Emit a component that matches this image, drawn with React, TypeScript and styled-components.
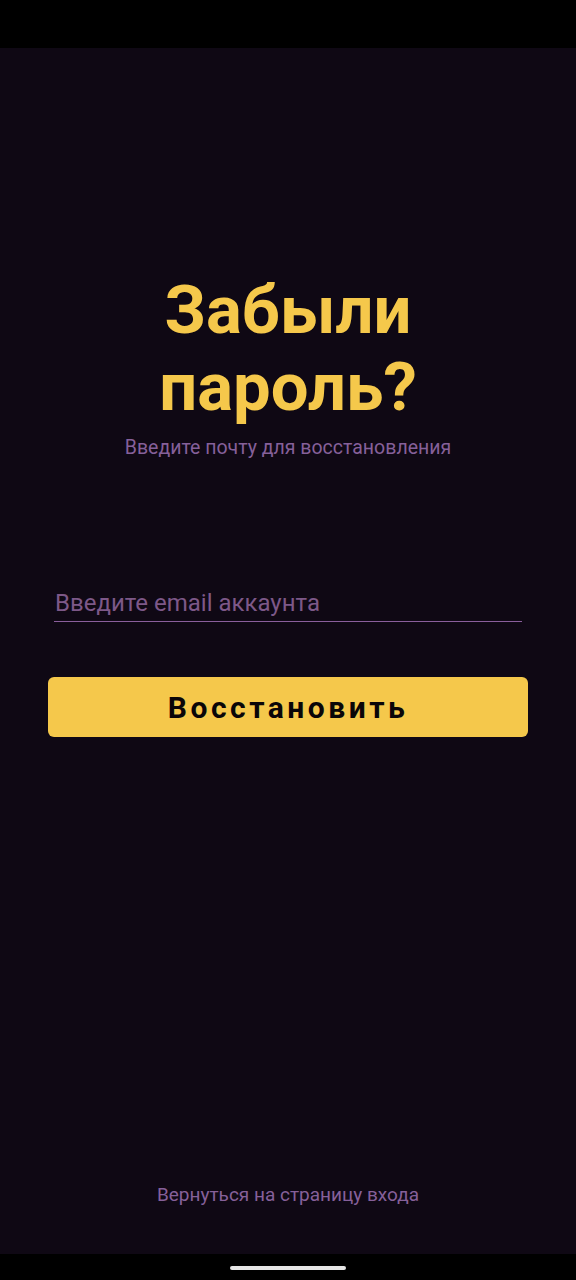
import { useState } from "react"
import styled, { createGlobalStyle } from "styled-components"

const GlobalStyle = createGlobalStyle`
   html, body {
      margin: 0;
      padding: 0;
      background: #0f0814;
   }
   * {
      box-sizing: border-box;
   }
`

const Screen = styled.div`
   width: 576px;
   height: 1280px;
   display: flex;
   flex-direction: column;
   background: #0f0814;
   font-family: Roboto, "Noto Sans", sans-serif;
`

const StatusBar = styled.div`
   height: 48px;
   flex-shrink: 0;
   background: #000;
`

const Content = styled.main`
   flex: 1;
   display: flex;
   flex-direction: column;
   align-items: center;
   padding: 224px 48px 0;
`

const Title = styled.h1`
   margin: 0;
   color: #f5c84b;
   font-size: 67px;
   font-weight: 700;
   line-height: 77px;
   text-align: center;
   width: 320px;
`

const Subtitle = styled.p`
   margin: 10px 0 0;
   color: #86609a;
   font-size: 19.5px;
   line-height: 24px;
   text-align: center;
`

const Field = styled.input`
   margin: 124px 6px 0;
   align-self: stretch;
   height: 38px;
   padding: 0 1px;
   background: transparent;
   border: none;
   border-bottom: 1px solid #8a5e9c;
   color: #e0d0e8;
   font-family: inherit;
   font-size: 24px;
   outline: none;

   &::placeholder {
      color: #7d5888;
   }
`

const PrimaryButton = styled.button`
   margin-top: 55px;
   align-self: stretch;
   height: 60px;
   border: none;
   border-radius: 6px;
   background: #f5c84b;
   color: #0a0608;
   font-family: inherit;
   font-size: 30px;
   font-weight: 700;
   letter-spacing: 3.5px;
   cursor: pointer;
`

const Spacer = styled.div`
   flex: 1;
`

const BackLink = styled.a`
   margin-bottom: 47px;
   color: #86609a;
   font-size: 19px;
   line-height: 24px;
   text-decoration: none;
   cursor: pointer;
`

const NavBar = styled.div`
   height: 26px;
   flex-shrink: 0;
   background: #000;
   display: flex;
   justify-content: center;
   padding-top: 12px;
`

const HomeIndicator = styled.div`
   width: 116px;
   height: 4px;
   border-radius: 2px;
   background: #e6e6e6;
`

export default function App() {
   const [email, setEmail] = useState("")

   return (
      <>
         <GlobalStyle />
         <Screen>
            <StatusBar />
            <Content>
               <Title>Забыли пароль?</Title>
               <Subtitle>Введите почту для восстановления</Subtitle>
               <Field
                  type="email"
                  placeholder="Введите email аккаунта"
                  value={email}
                  onChange={e => setEmail(e.target.value)}
               />
               <PrimaryButton>Восстановить</PrimaryButton>
               <Spacer />
               <BackLink>Вернуться на страницу входа</BackLink>
            </Content>
            <NavBar>
               <HomeIndicator />
            </NavBar>
         </Screen>
      </>
   )
}
